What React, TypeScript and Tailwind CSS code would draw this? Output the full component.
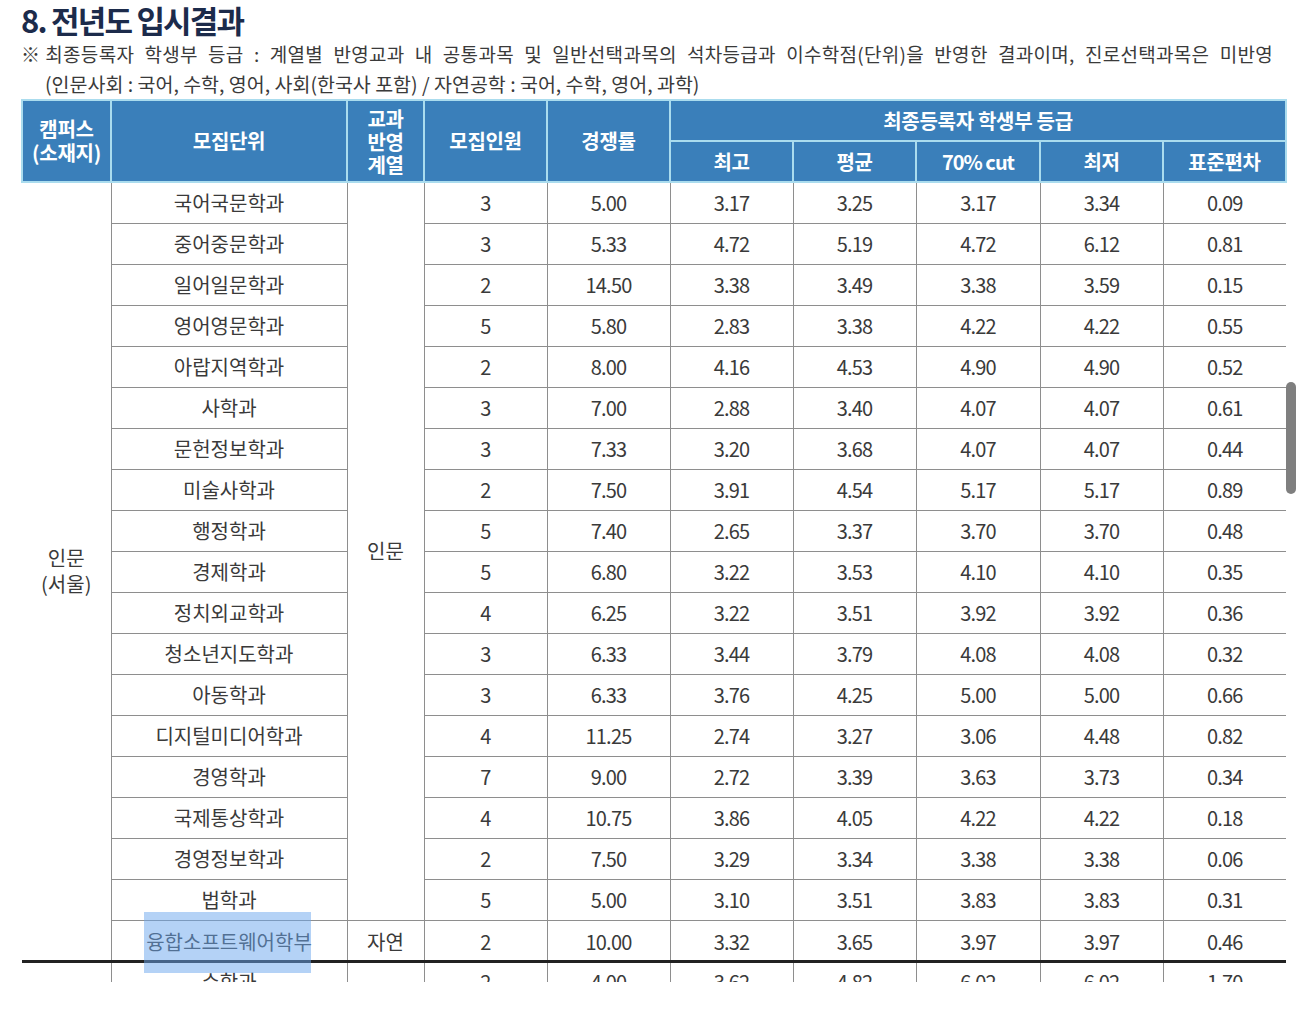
import React from "react";

type Row = [string, string, string, string, string, string, string, string];

const rows: Row[] = [
  ["국어국문학과", "3", "5.00", "3.17", "3.25", "3.17", "3.34", "0.09"],
  ["중어중문학과", "3", "5.33", "4.72", "5.19", "4.72", "6.12", "0.81"],
  ["일어일문학과", "2", "14.50", "3.38", "3.49", "3.38", "3.59", "0.15"],
  ["영어영문학과", "5", "5.80", "2.83", "3.38", "4.22", "4.22", "0.55"],
  ["아랍지역학과", "2", "8.00", "4.16", "4.53", "4.90", "4.90", "0.52"],
  ["사학과", "3", "7.00", "2.88", "3.40", "4.07", "4.07", "0.61"],
  ["문헌정보학과", "3", "7.33", "3.20", "3.68", "4.07", "4.07", "0.44"],
  ["미술사학과", "2", "7.50", "3.91", "4.54", "5.17", "5.17", "0.89"],
  ["행정학과", "5", "7.40", "2.65", "3.37", "3.70", "3.70", "0.48"],
  ["경제학과", "5", "6.80", "3.22", "3.53", "4.10", "4.10", "0.35"],
  ["정치외교학과", "4", "6.25", "3.22", "3.51", "3.92", "3.92", "0.36"],
  ["청소년지도학과", "3", "6.33", "3.44", "3.79", "4.08", "4.08", "0.32"],
  ["아동학과", "3", "6.33", "3.76", "4.25", "5.00", "5.00", "0.66"],
  ["디지털미디어학과", "4", "11.25", "2.74", "3.27", "3.06", "4.48", "0.82"],
  ["경영학과", "7", "9.00", "2.72", "3.39", "3.63", "3.73", "0.34"],
  ["국제통상학과", "4", "10.75", "3.86", "4.05", "4.22", "4.22", "0.18"],
  ["경영정보학과", "2", "7.50", "3.29", "3.34", "3.38", "3.38", "0.06"],
  ["법학과", "5", "5.00", "3.10", "3.51", "3.83", "3.83", "0.31"],
];

const lastRow: Row = ["융합소프트웨어학부", "2", "10.00", "3.32", "3.65", "3.97", "3.97", "0.46"];
const nextRow: Row = ["수학과", "2", "4.00", "3.62", "4.82", "6.02", "6.02", "1.70"];

const th =
  "border-2 border-[#aadcee] bg-[#3a7fba] text-white font-bold text-[20px] tracking-[-0.3px] text-center align-middle p-0";
const td =
  "border-l border-b border-[#8e8e8e] text-center align-middle p-0 text-[20px] text-[#3a3a3a] whitespace-nowrap";
const tdLast =
  "border-l border-[#8e8e8e] border-b-[3px] border-b-[#222] text-center align-middle p-0 text-[20px] text-[#3a3a3a] whitespace-nowrap";
const kr = "tracking-[0px]";
const num = "tracking-[-0.8px]";

function Cells({ r, cls }: { r: Row; cls: string }) {
  return (
    <>
      {r.slice(1).map((v, i) => (
        <td key={i} className={`${cls} ${num}`}>
          {v}
        </td>
      ))}
    </>
  );
}

export default function App() {
  return (
    <div className="relative w-[1298px] h-[1022px] bg-white overflow-hidden font-['Noto_Sans_CJK_KR','Noto_Sans',sans-serif]">
      <div className="pl-[21px]">
        <h1 className="h-[40px] leading-[40px] text-[31px] font-bold text-[#1c2b4b] tracking-[-1.8px]">
          8. 전년도 입시결과
        </h1>
        <p className="w-[1252px] h-[28px] leading-[28px] text-[19px] text-[#3a3a3a] tracking-[0.3px] [text-align-last:justify] whitespace-nowrap">
          <span className="inline-block mr-[5px]">※</span>최종등록자 학생부 등급 : 계열별 반영교과 내 공통과목 및 일반선택과목의 석차등급과 이수학점(단위)을 반영한 결과이며, 진로선택과목은 미반영
        </p>
        <p className="h-[31px] leading-[31px] pl-[24px] text-[19.5px] text-[#3a3a3a] tracking-[0px] whitespace-nowrap">
          (인문사회 : 국어, 수학, 영어, 사회(한국사 포함) / 자연공학 : 국어, 수학, 영어, 과학)
        </p>
        <div className="h-[883px] overflow-hidden">
          <table className="table-fixed border-collapse w-[1264px]">
            <colgroup>
              <col className="w-[89px]" />
              <col className="w-[236px]" />
              <col className="w-[77px]" />
              <col className="w-[123px]" />
              <col className="w-[123px]" />
              <col className="w-[123px]" />
              <col className="w-[123px]" />
              <col className="w-[124px]" />
              <col className="w-[123px]" />
              <col className="w-[123px]" />
            </colgroup>
            <thead>
              <tr className="h-[41px]">
                <th rowSpan={2} className={`${th} leading-[24px]`}>
                  캠퍼스
                  <br />
                  (소재지)
                </th>
                <th rowSpan={2} className={th}>
                  모집단위
                </th>
                <th rowSpan={2} className={`${th} leading-[23px]`}>
                  교과
                  <br />
                  반영
                  <br />
                  계열
                </th>
                <th rowSpan={2} className={th}>
                  모집인원
                </th>
                <th rowSpan={2} className={th}>
                  경쟁률
                </th>
                <th colSpan={5} className={th}>
                  최종등록자 학생부 등급
                </th>
              </tr>
              <tr className="h-[41px]">
                <th className={th}>최고</th>
                <th className={th}>평균</th>
                <th className={`${th} tracking-[-1px]`}>70% cut</th>
                <th className={th}>최저</th>
                <th className={th}>표준편차</th>
              </tr>
            </thead>
            <tbody>
              {rows.map((r, i) => (
                <tr key={i} className="h-[41px]">
                  {i === 0 && (
                    <td
                      rowSpan={19}
                      className={`border-b-[3px] border-b-[#222] text-center align-middle p-0 text-[20px] leading-[26px] text-[#3a3a3a] ${kr}`}
                    >
                      인문
                      <br />
                      (서울)
                    </td>
                  )}
                  <td className={`${td} ${kr}`}>{r[0]}</td>
                  {i === 0 && (
                    <td rowSpan={18} className={`${td} ${kr}`}>
                      인문
                    </td>
                  )}
                  <Cells r={r} cls={td} />
                </tr>
              ))}
              <tr className="h-[41px]">
                <td className={`${tdLast} ${kr} pt-[3px]`}>{lastRow[0]}</td>
                <td className={`${tdLast} ${kr} pt-[3px]`}>자연</td>
                {lastRow.slice(1).map((v, i) => (
                  <td key={i} className={`${tdLast} ${num} pt-[3px]`}>
                    {v}
                  </td>
                ))}
              </tr>
              <tr className="h-[41px]">
                <td className="p-0"></td>
                <td className={`${td} ${kr}`}>{nextRow[0]}</td>
                <td className={td}></td>
                <Cells r={nextRow} cls={td} />
              </tr>
            </tbody>
          </table>
        </div>
      </div>
      <div className="absolute left-[144px] top-[912px] w-[167px] h-[61px] bg-[#6aa6ee]/50"></div>
      <div className="absolute left-[1286px] top-[382px] w-[10px] h-[112px] rounded-full bg-[#7f7f7f]"></div>
    </div>
  );
}
